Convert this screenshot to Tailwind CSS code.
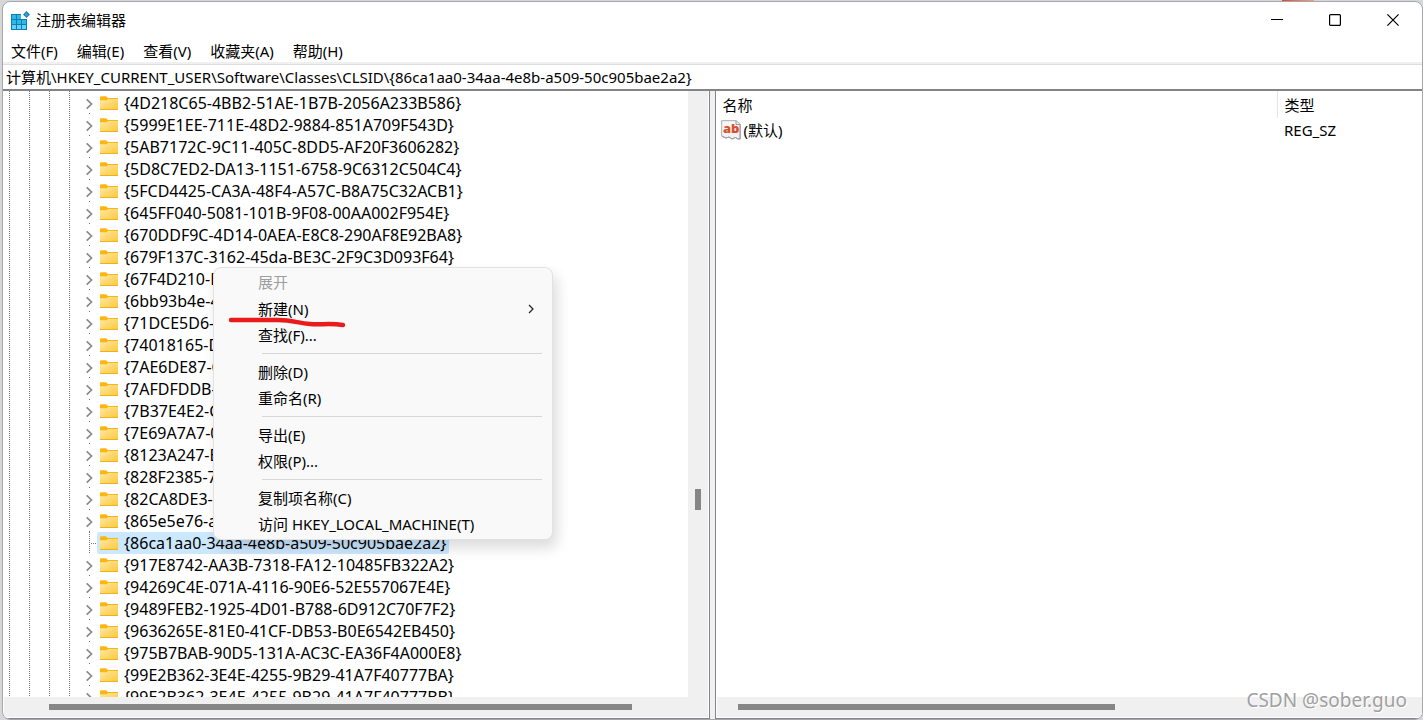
<!DOCTYPE html>
<html lang="zh-CN">
<head>
<meta charset="utf-8">
<title>注册表编辑器</title>
<script src="https://cdn.jsdelivr.net/npm/@tailwindcss/browser@4"></script>
</head>
<body class="h-screen overflow-hidden bg-[#d6d7d9] pt-px pl-0.5 font-['Noto_Sans','Noto_Sans_CJK_SC',sans-serif] text-[15px] text-black">
<svg class="absolute size-0">
  <defs>
    <linearGradient id="fold" x1="0" y1="0" x2="1" y2="1"><stop offset="0" stop-color="#ffe8a3"/><stop offset="1" stop-color="#fdc83c"/></linearGradient>
  </defs>
  <symbol id="folder" viewBox="0 0 18 14"><path d="M0 1.500Q0 .3 1.200.3H6L7.800 2H18V8H0Z" fill="#fbb511"/><path d="M0 4.200H6.500L8 3H18V13.500H0Z" fill="url(#fold)"/><path d="M0 13.500H18" stroke="#eeb01d" stroke-width="1"/></symbol>
  <symbol id="chev" viewBox="0 0 8 12"><path d="M1.700 1.300L6.500 6L1.700 10.700" fill="none" stroke="#8a8a8a" stroke-width="1.700"/></symbol>
</svg>
<div class="absolute top-0 left-[1282px] h-0.5 w-8 bg-linear-to-r from-[#d6473a] to-[#eba283]"></div>
<div class="relative flex h-full flex-col overflow-hidden rounded-lg border border-[#a5a7aa] bg-white">
  <header class="flex h-9 shrink-0 items-center justify-between pl-[7px]">
    <div class="flex items-center gap-1.5 pt-0.5">
      <svg class="size-5" viewBox="0 0 20 20"><path d="M1 3H11V8H17V19H1Z" fill="#087fb9"/><path d="M2 4h4v4H2zM7 4h4v4H7zM2 9h4v4H2zM7 9h4v4H7zM12 9h4v4h-4z" fill="#32b5e7"/><path d="M2 14h4v4H2zM7 14h4v4H7zM12 14h4v4h-4z" fill="#65d2f5"/><path d="M16.500 0L20 3.500L16.500 7L13 3.500Z" fill="#1381b8"/><path d="M16.500 1.500L18.500 3.500L16.500 5.500L14.500 3.500Z" fill="#3d9dcc"/></svg>
      <h1 class="pb-0.5 leading-5">注册表编辑器</h1>
    </div>
    <div class="flex">
      <button aria-label="最小化" class="flex h-9 w-[58px] items-center justify-center"><svg class="size-3" viewBox="0 0 12 12"><path d="M0 5.500H12" stroke="#000"/></svg></button>
      <button aria-label="最大化" class="flex h-9 w-[58px] items-center justify-center"><svg class="size-3" viewBox="0 0 12 12"><rect x=".6" y=".6" width="10.800" height="10.800" rx="1" fill="none" stroke="#000" stroke-width="1.200"/></svg></button>
      <button aria-label="关闭" class="flex h-9 w-[58px] items-center justify-center"><svg class="size-3" viewBox="0 0 12 12"><path d="M.4.4L11.600 11.600M11.600.4L.4 11.600" stroke="#000" stroke-width="1.200"/></svg></button>
    </div>
  </header>
  <nav class="flex h-6 shrink-0 items-center gap-[19px] pl-2 pt-0.5 leading-5">
    <button>文件(F)</button><button>编辑(E)</button><button>查看(V)</button><button>收藏夹(A)</button><button>帮助(H)</button>
  </nav>
  <div class="h-[3px] shrink-0 border-b border-[#dedede] bg-[#f0f0f0]"></div>
  <input aria-label="地址" class="h-6 w-full shrink-0 pb-0.5 pl-[3px] outline-none" value="计算机\HKEY_CURRENT_USER\Software\Classes\CLSID\{86ca1aa0-34aa-4e8b-a509-50c905bae2a2}">
  <main class="flex min-h-0 flex-1 border-t-2 border-[#838389]">
    <section class="flex w-[calc(50%-3px)] min-w-0 shrink-0 flex-col border-r border-b border-[#838389]">
      <div class="flex min-h-0 flex-1">
        <div class="flex min-w-0 flex-1 gap-[19px] overflow-hidden pl-1.5">
          <div class="w-px bg-[repeating-linear-gradient(#777_0_1px,#fff_1px_2px)]"></div>
          <div class="w-px bg-[repeating-linear-gradient(#777_0_1px,#fff_1px_2px)]"></div>
          <div class="w-px bg-[repeating-linear-gradient(#777_0_1px,#fff_1px_2px)]"></div>
          <div class="w-px bg-[repeating-linear-gradient(#777_0_1px,#fff_1px_2px)]"></div>
          <ul id="tree" class="-ml-1 pt-px text-base"></ul>
        </div>
        <div class="mr-px flex w-5 justify-center bg-[#f0f0f0] pt-[398px]"><div class="h-[21px] w-1.5 bg-[#868686]"></div></div>
      </div>
      <div class="mx-px mb-px flex h-5 shrink-0 items-center bg-[#f0f0f0] pr-[76px] pl-[45px]"><div class="h-1.5 flex-1 bg-[#868686]"></div></div>
    </section>
    <div class="w-[5px] shrink-0 bg-[#f0f0f0]"></div>
    <section class="flex min-w-0 flex-1 flex-col border-b border-l border-[#838389]">
      <table class="w-full table-fixed border-collapse text-left leading-5">
        <thead><tr class="h-[27px]"><th class="border-r border-[#e5e5e5] pl-[7px] font-normal">名称</th><th class="w-[145px] pl-[7px] font-normal">类型</th></tr></thead>
        <tbody><tr class="h-6"><td class="pl-[5px]"><div class="flex items-center gap-[3px]">
          <svg class="h-5 w-5" viewBox="0 0 20 20"><path d="M.7.700H15L19.300 4V19H17L14.500 17.500L11 19L8 17L5 18L.7 16Z" fill="#f8f8f8" stroke="#aaa"/><path d="M15 .700V4.500H19.300M19 5V19H17L14.500 17.500L11 19L8 17L5 18L.7 16" fill="#ddd" fill-opacity=".2" stroke="#999"/><text x="2" y="12.500" font-family="Open Sans" font-weight="800" font-size="13" fill="#d9502f">ab</text></svg>
          <span>(默认)</span></div></td><td class="pl-[7px]">REG_SZ</td></tr></tbody>
      </table>
      <div class="mt-auto mb-px ml-px flex h-5 shrink-0 items-center bg-[#f0f0f0] pr-[307px] pl-[21px]"><div class="h-1.5 flex-1 bg-[#868686]"></div></div>
    </section>
  </main>
</div>

<div role="menu" class="absolute top-[267px] left-[213px] flex w-[340px] flex-col rounded-lg border border-[#e2e2e2] bg-[#f9f9f9] pt-px pb-0.5 pr-2.5 pl-11 text-left leading-5 shadow-[4px_8px_14px_rgba(0,0,0,0.14)]">
  <button class="h-[27px] pb-0.5 text-left text-[#9d9d9d]" disabled>展开</button>
  <button class="flex h-[26px] items-center justify-between pr-[7px]">新建(N)<svg class="h-2.5 w-2" viewBox="0 0 8 10"><path d="M2 1L6 5L2 9" fill="none" stroke="#222" stroke-width="1.200"/></svg></button>
  <button class="h-[26px] text-left">查找(F)...</button>
  <hr class="my-[5px] ml-1 border-[#d7d7d7]">
  <button class="h-[26px] text-left">删除(D)</button>
  <button class="h-[26px] text-left">重命名(R)</button>
  <hr class="my-[5px] ml-1 border-[#d7d7d7]">
  <button class="h-[26px] text-left">导出(E)</button>
  <button class="h-[26px] text-left">权限(P)...</button>
  <hr class="my-[5px] ml-1 border-[#d7d7d7]">
  <button class="h-[26px] text-left">复制项名称(C)</button>
  <button class="h-[26px] text-left">访问 HKEY_LOCAL_MACHINE(T)</button>
</div>
<svg class="absolute top-[314px] left-[226px] h-4 w-[124px]" viewBox="0 0 124 16"><path d="M5 6H52C66 6 72 9 84 10C94 11 104 9 117 11" fill="none" stroke="#e81c1c" stroke-width="4.500" stroke-linecap="round"/></svg>
<div class="absolute right-4 bottom-1.5 font-['Noto_Sans'] text-[19px] leading-7 text-[#a0a0a0] [text-shadow:1px_1px_0_#fff]">CSDN @sober.guo</div>

<script>
const keys = ['4D218C65-4BB2-51AE-1B7B-2056A233B586','5999E1EE-711E-48D2-9884-851A709F543D','5AB7172C-9C11-405C-8DD5-AF20F3606282','5D8C7ED2-DA13-1151-6758-9C6312C504C4','5FCD4425-CA3A-48F4-A57C-B8A75C32ACB1','645FF040-5081-101B-9F08-00AA002F954E','670DDF9C-4D14-0AEA-E8C8-290AF8E92BA8','679F137C-3162-45da-BE3C-2F9C3D093F64','67F4D210-B','6bb93b4e-4','71DCE5D6-4','74018165-D','7AE6DE87-C','7AFDFDDB-','7B37E4E2-C','7E69A7A7-0','8123A247-E','828F2385-7','82CA8DE3-0','865e5e76-a','86ca1aa0-34aa-4e8b-a509-50c905bae2a2','917E8742-AA3B-7318-FA12-10485FB322A2','94269C4E-071A-4116-90E6-52E557067E4E','9489FEB2-1925-4D01-B788-6D912C70F7F2','9636265E-81E0-41CF-DB53-B0E6542EB450','975B7BAB-90D5-131A-AC3C-EA36F4A000E8','99E2B362-3E4E-4255-9B29-41A7F40777BA','99E2B362-3E4E-4255-9B29-41A7F40777BB'];
const selected = '86ca1aa0-34aa-4e8b-a509-50c905bae2a2';
document.getElementById('tree').innerHTML = keys.map(k => {
  const on = k === selected;
  const branch = on
    ? '<span class="flex h-full w-3 items-center"><span class="ml-1 h-full w-px bg-[repeating-linear-gradient(#777_0_1px,#fff_1px_2px)]"></span><span class="h-px flex-1 bg-[repeating-linear-gradient(90deg,#fff_0_1px,#777_1px_2px)]"></span></span>'
    : '<button aria-label="展开" class="flex h-full w-3 flex-col"><svg class="mt-1.5 h-3 w-2"><use href="#chev"/></svg><span class="mt-[3px] ml-1 h-px w-px bg-[#777]"></span></button>';
  const close = k.length > 12 ? '}' : '';
  return '<li class="flex h-[22px] items-center whitespace-nowrap">' + branch +
    '<span class="flex h-[22px] items-center gap-1.5 rounded-xs px-[3px] leading-5 ' + (on ? 'bg-[#cce8ff]' : '') + '"><svg class="h-3.5 w-[18px]"><use href="#folder"/></svg>{' + k + close + '</span></li>';
}).join('');
</script>
</body>
</html>
